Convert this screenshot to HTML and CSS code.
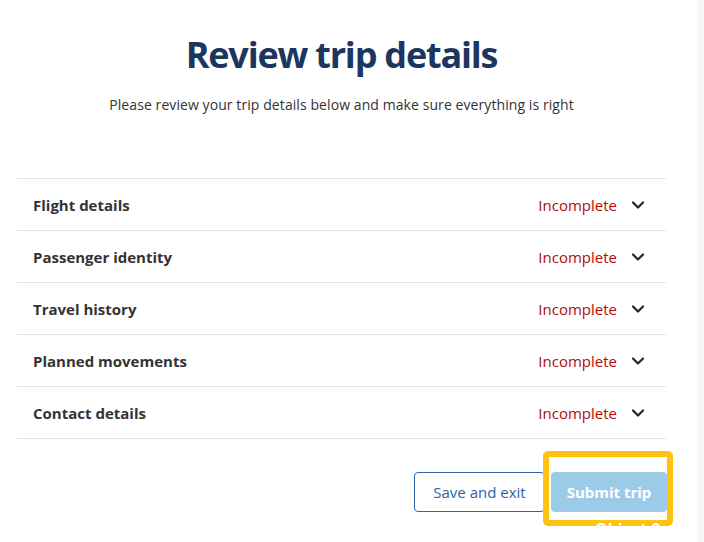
FILE: index.html
```html
<!DOCTYPE html>
<html lang="en">
<head>
<meta charset="utf-8">
<title>Review trip details</title>
<link rel="stylesheet" href="styles.css">
</head>
<body>
<div class="page">
  <main class="main">
    <header class="intro">
      <h1 class="title">Review trip details</h1>
      <p class="lead">Please review your trip details below and make sure everything is right</p>
    </header>
    <ul class="sections">
      <li class="section"><span class="section-name">Flight details</span><span class="status">Incomplete</span><svg class="chev" viewBox="0 0 14 14" width="14" height="14"><path d="M2 4.5 L7 9.5 L12 4.5" fill="none" stroke="#1f2633" stroke-width="2.2" stroke-linecap="round" stroke-linejoin="round"/></svg></li>
      <li class="section"><span class="section-name">Passenger identity</span><span class="status">Incomplete</span><svg class="chev" viewBox="0 0 14 14" width="14" height="14"><path d="M2 4.5 L7 9.5 L12 4.5" fill="none" stroke="#1f2633" stroke-width="2.2" stroke-linecap="round" stroke-linejoin="round"/></svg></li>
      <li class="section"><span class="section-name">Travel history</span><span class="status">Incomplete</span><svg class="chev" viewBox="0 0 14 14" width="14" height="14"><path d="M2 4.5 L7 9.5 L12 4.5" fill="none" stroke="#1f2633" stroke-width="2.2" stroke-linecap="round" stroke-linejoin="round"/></svg></li>
      <li class="section"><span class="section-name">Planned movements</span><span class="status">Incomplete</span><svg class="chev" viewBox="0 0 14 14" width="14" height="14"><path d="M2 4.5 L7 9.5 L12 4.5" fill="none" stroke="#1f2633" stroke-width="2.2" stroke-linecap="round" stroke-linejoin="round"/></svg></li>
      <li class="section"><span class="section-name">Contact details</span><span class="status">Incomplete</span><svg class="chev" viewBox="0 0 14 14" width="14" height="14"><path d="M2 4.5 L7 9.5 L12 4.5" fill="none" stroke="#1f2633" stroke-width="2.2" stroke-linecap="round" stroke-linejoin="round"/></svg></li>
    </ul>
    <div class="actions">
      <button class="btn btn-secondary" type="button">Save and exit</button>
      <div class="focus-ring">
        <button class="btn btn-primary" type="button" disabled>Submit trip</button>
        <span class="ring-label">Object 9</span>
      </div>
    </div>
  </main>
  <div class="gutter"></div>
</div>
</body>
</html>
```
FILE: styles.css
```css
* { box-sizing: border-box; }
html, body { margin: 0; padding: 0; background: #fff; }
body {
  font-family: "Open Sans", "Noto Sans", "Liberation Sans", sans-serif;
  color: #333;
  width: 704px;
  height: 542px;
  overflow: hidden;
}
.page { display: flex; height: 542px; }
.main {
  width: 683px;
  padding: 0 17px;
  margin-right: 15px;
}
.gutter { flex: 1; background: #f4f7fb; }
.intro { text-align: center; padding-top: 30px; }
.title {
  margin: 0;
  font-size: 36px;
  line-height: 50px;
  font-weight: 700;
  color: #1b365f;
  letter-spacing: -1.2px;
}
.lead {
  margin: 15px 0 0;
  font-size: 14px;
  line-height: 20px;
  color: #333;
  letter-spacing: 0.08px;
}
.sections {
  list-style: none;
  margin: 63px 0 0;
  padding: 0;
  border-top: 1px solid #dfe5ec;
}
.section {
  display: flex;
  align-items: center;
  height: 52px;
  padding: 0 21px 0 16px;
  border-bottom: 1px solid #dfe5ec;
}
.section-name { flex: 1; font-size: 15px; font-weight: 700; color: #333; }
.status { font-size: 15px; color: #b00c0c; margin-right: 14px; }
.chev { display: block; }
.actions {
  display: flex;
  justify-content: flex-end;
  align-items: flex-end;
  margin-top: 12px;
  margin-right: -7px;
}
.btn {
  font-family: inherit;
  font-size: 15px;
  height: 40px;
  border-radius: 4px;
  padding: 0;
  white-space: nowrap;
}
.btn-secondary {
  background: #fff;
  color: #2b63a7;
  border: 1px solid #2b63a7;
  width: 131px;
  margin-right: -2px;
  margin-bottom: 14px;
}
.focus-ring {
  position: relative;
  border: 6px solid #ffc20e;
  border-radius: 5px;
  padding: 15px 0 8px 2px;
  width: 130px;
}
.btn-primary {
  display: block;
  width: 116px;
  background: #9ccbe8;
  color: #fff;
  font-weight: 700;
  border: none;
}
.ring-label {
  position: absolute;
  left: 46px;
  top: 62px;
  color: #fff;
  font-size: 16px;
  font-weight: 700;
  line-height: 20px;
  white-space: nowrap;
}
```
